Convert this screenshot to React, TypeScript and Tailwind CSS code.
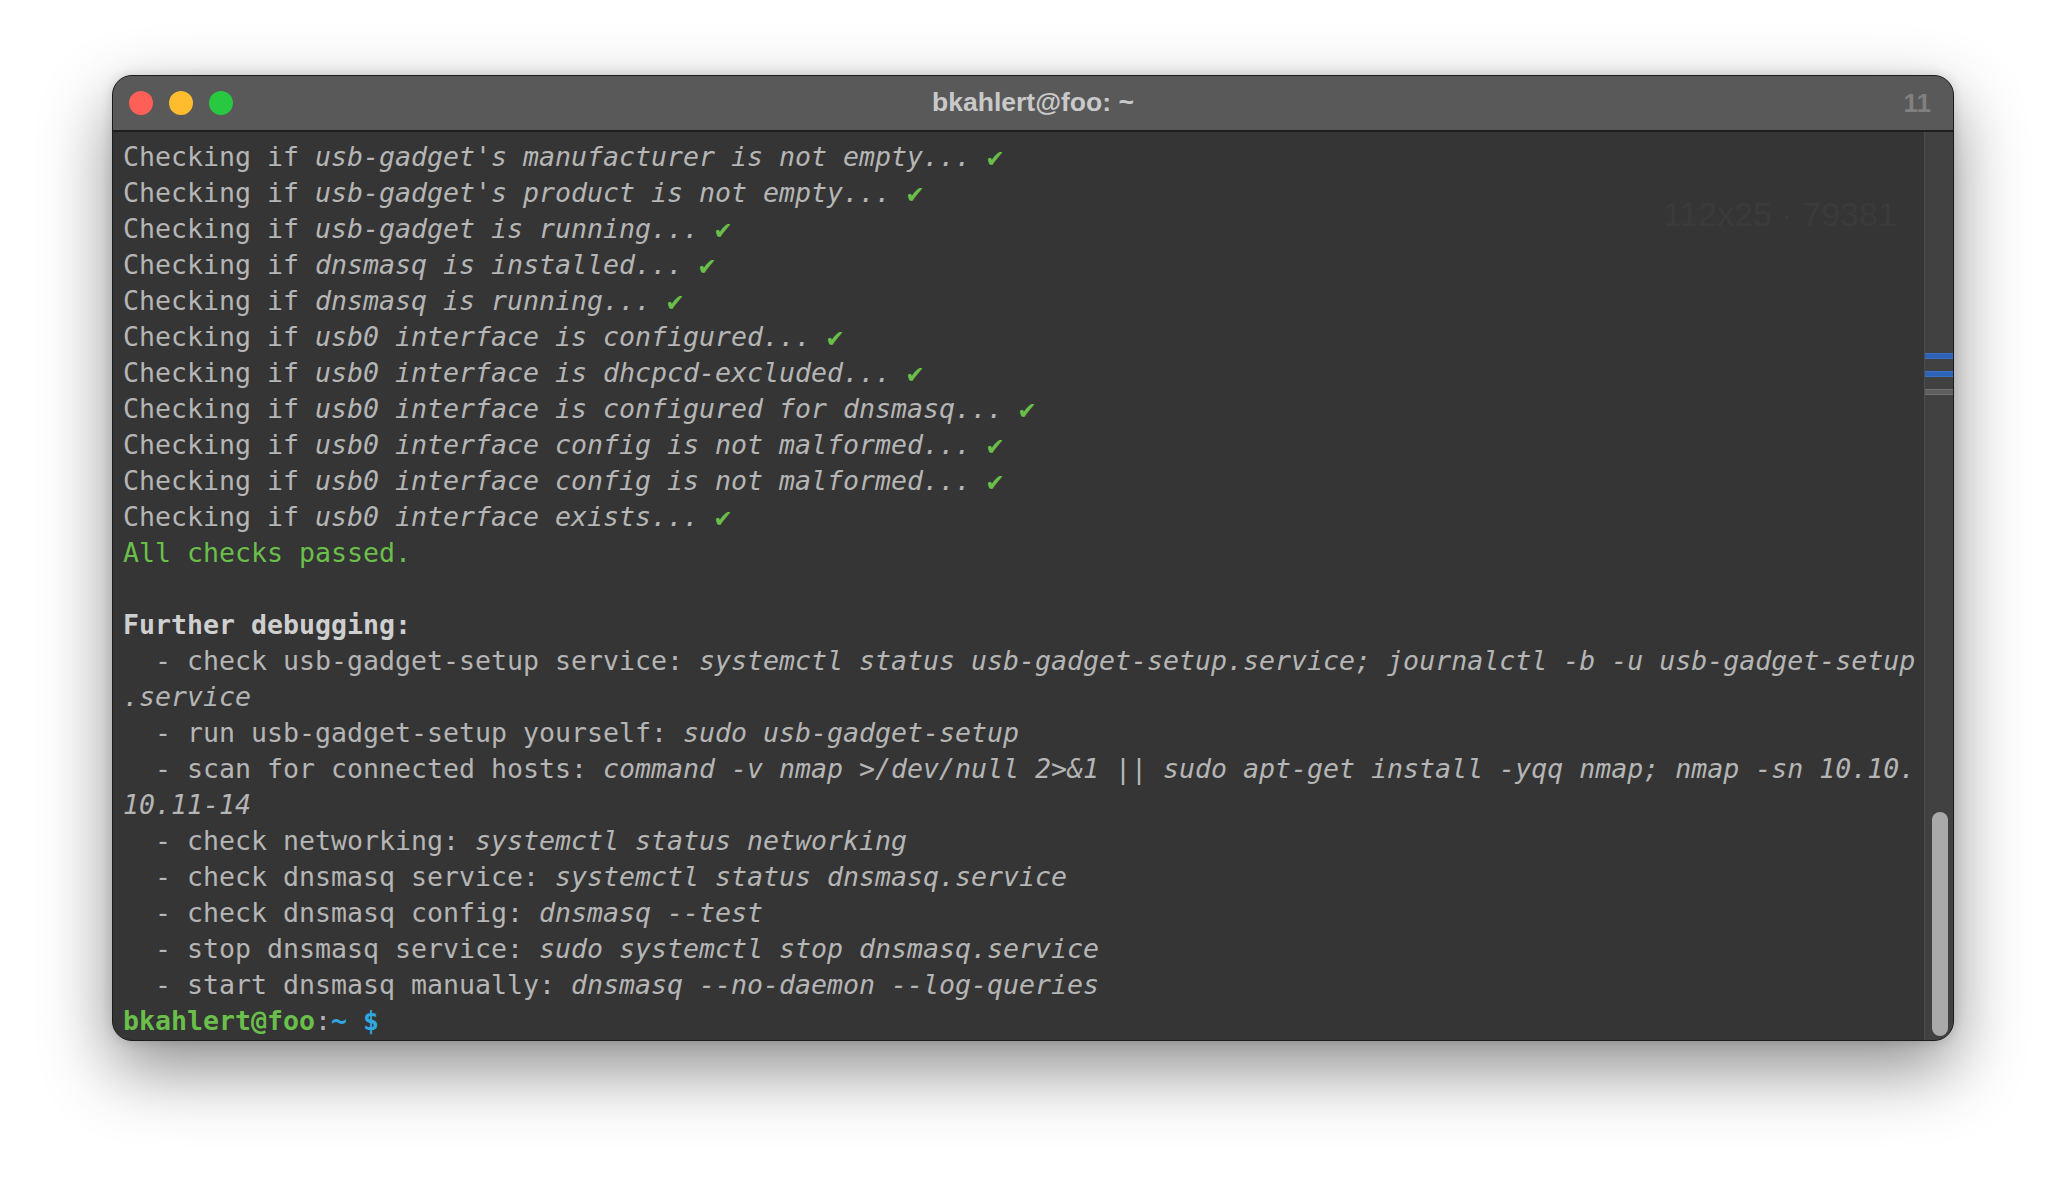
import React from "react";

type Seg = { t: string; i?: boolean; c?: string; b?: boolean };

const check = (s: string): Seg[] => [
  { t: "Checking if " },
  { t: s, i: true },
  { t: " " },
  { t: "✔", c: "text-[#6abf4b]" },
];

const item = (label: string, cmd: string): Seg[] => [
  { t: `  - ${label}: ` },
  { t: cmd, i: true },
];

const lines: Seg[][] = [
  check("usb-gadget's manufacturer is not empty..."),
  check("usb-gadget's product is not empty..."),
  check("usb-gadget is running..."),
  check("dnsmasq is installed..."),
  check("dnsmasq is running..."),
  check("usb0 interface is configured..."),
  check("usb0 interface is dhcpcd-excluded..."),
  check("usb0 interface is configured for dnsmasq..."),
  check("usb0 interface config is not malformed..."),
  check("usb0 interface config is not malformed..."),
  check("usb0 interface exists..."),
  [{ t: "All checks passed.", c: "text-[#6abf4b]" }],
  [{ t: " " }],
  [{ t: "Further debugging:", b: true, c: "text-[#cfcfcf]" }],
  item(
    "check usb-gadget-setup service",
    "systemctl status usb-gadget-setup.service; journalctl -b -u usb-gadget-setup"
  ),
  [{ t: ".service", i: true }],
  item("run usb-gadget-setup yourself", "sudo usb-gadget-setup"),
  item(
    "scan for connected hosts",
    "command -v nmap >/dev/null 2>&1 || sudo apt-get install -yqq nmap; nmap -sn 10.10."
  ),
  [{ t: "10.11-14", i: true }],
  item("check networking", "systemctl status networking"),
  item("check dnsmasq service", "systemctl status dnsmasq.service"),
  item("check dnsmasq config", "dnsmasq --test"),
  item("stop dnsmasq service", "sudo systemctl stop dnsmasq.service"),
  item("start dnsmasq manually", "dnsmasq --no-daemon --log-queries"),
  [
    { t: "bkahlert@foo", b: true, c: "text-[#6abf4b]" },
    { t: ":" },
    { t: "~", b: true, c: "text-[#2fa8e0]" },
    { t: " " },
    { t: "$", b: true, c: "text-[#2fa8e0]" },
  ],
];

function Line({ segs }: { segs: Seg[] }) {
  return (
    <div className="h-[36px] whitespace-pre">
      {segs.map((s, k) => (
        <span
          key={k}
          className={[s.i ? "italic" : "", s.b ? "font-bold" : "", s.c ?? ""].join(" ")}
        >
          {s.t}
        </span>
      ))}
    </div>
  );
}

export default function App() {
  return (
    <div className="w-[2066px] h-[1190px] bg-white pt-[75px] pl-[112px] overflow-hidden">
      <div className="w-[1842px] h-[966px] flex flex-col rounded-[20px] overflow-hidden bg-[#353535] border border-[#1c1c1c] shadow-[0_28px_70px_rgba(0,0,0,0.45),0_0_12px_rgba(0,0,0,0.15)]">
        {/* title bar */}
        <div className="relative h-[56px] shrink-0 bg-[#595959] border-b-2 border-[#1e1e1e] flex items-center justify-between">
          <div className="flex gap-[16px] pl-[16px]">
            <div className="w-[24px] h-[24px] rounded-full bg-[#fe5f57]" />
            <div className="w-[24px] h-[24px] rounded-full bg-[#febc2e]" />
            <div className="w-[24px] h-[24px] rounded-full bg-[#28c840]" />
          </div>
          <div className="absolute inset-x-0 top-0 h-full flex items-center justify-center font-['Liberation_Sans',Arial,sans-serif] font-bold text-[26.5px] text-[#c9c9c9]">
            bkahlert@foo: ~
          </div>
          <div className="pr-[22px] font-['Liberation_Sans',Arial,sans-serif] font-bold text-[26px] text-[#808080]">
            11
          </div>
        </div>
        {/* body */}
        <div className="relative flex flex-1 min-h-0">
          <div className="flex-1 pl-[10px] pt-[7px] font-['DejaVu_Sans_Mono',monospace] text-[26.58px] leading-[36px] text-[#b5b5b5]">
            {lines.map((l, k) => (
              <Line key={k} segs={l} />
            ))}
          </div>
          <div className="absolute left-[1550px] top-[57px] font-['Liberation_Sans',Arial,sans-serif] text-[34px] text-[#3b3b3b] whitespace-pre">
            112x25 · 79381
          </div>
          {/* scrollbar */}
          <div className="w-[29px] shrink-0 bg-[#414141] border-l border-[#4d4d4d] flex flex-col">
            <div className="mt-[221px] h-[6px] bg-[#2f63b8] border-y border-[#3a6fc4]" />
            <div className="mt-[12px] h-[6px] bg-[#2f63b8] border-y border-[#3a6fc4]" />
            <div className="mt-[12px] h-[6px] bg-[#5e5e5e] border-y border-[#727272]" />
            <div className="mt-auto mb-[4px] ml-[7px] w-[16px] h-[224px] rounded-full bg-[#a9a9a9]" />
          </div>
        </div>
      </div>
    </div>
  );
}
